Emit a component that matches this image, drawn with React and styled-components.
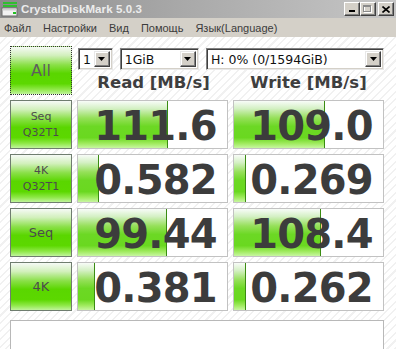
import React from "react";
import styled, { createGlobalStyle } from "styled-components";

const Global = createGlobalStyle`
  html, body { margin: 0; padding: 0; }
  body { width: 396px; height: 349px; overflow: hidden; background: #fff; }
`;

const Window = styled.div`
  width: 396px;
  height: 349px;
  display: flex;
  flex-direction: column;
  overflow: hidden;
  font-family: "Liberation Sans", Arial, sans-serif;
`;

const TitleBar = styled.div`
  height: 18px;
  flex: none;
  display: flex;
  align-items: center;
  padding: 0 2px 0 1px;
  background: linear-gradient(to right, #8c8c8c 0%, #a8a8a8 45%, #c6c6c6 100%);
`;

const TitleText = styled.div`
  flex: 1;
  margin-left: 3px;
  font-weight: bold;
  font-size: 11.5px;
  color: #ececec;
  letter-spacing: 0.1px;
`;

const WinButtons = styled.div`
  display: flex;
  align-items: center;
`;

const WinButton = styled.div`
  width: 16px;
  height: 14px;
  box-sizing: border-box;
  background: #d4d0c8;
  border-top: 1px solid #fff;
  border-left: 1px solid #fff;
  border-right: 1px solid #404040;
  border-bottom: 1px solid #404040;
  box-shadow: inset -1px -1px 0 #808080;
  margin-left: ${(p) => (p.$gap ? "2px" : "0")};
  display: flex;
  align-items: center;
  justify-content: center;
`;

const MenuBar = styled.div`
  height: 19px;
  flex: none;
  display: flex;
  align-items: center;
  background: #d4d0c8;
  padding-left: 4px;
  gap: 12px;
`;

const MenuItem = styled.span`
  font-size: 11px;
  color: #3c3c3c;
`;

const Main = styled.div`
  flex: 1;
  display: grid;
  grid-template-columns: 62px 151px 151px;
  grid-auto-rows: 49px;
  column-gap: 5px;
  row-gap: 5px;
  padding: 9px 12px 0 10px;
  background: repeating-linear-gradient(
    135deg,
    #ffffff 0px,
    #ffffff 4px,
    #f1f1f1 4px,
    #f1f1f1 5.5px
  );
  align-content: start;
`;

const greenFace = `linear-gradient(
    #f6faf6 0%,
    #d2f0bc 18%,
    #8ae048 38%,
    #5ad600 56%,
    #5cd800 78%,
    #8ee846 90%,
    #c0f49c 100%
  )`;

const AllButton = styled.div`
  box-sizing: border-box;
  height: 49px;
  border: 1px dotted #333;
  background: ${greenFace};
  display: flex;
  align-items: center;
  justify-content: center;
  font-family: "DejaVu Sans", sans-serif;
  font-size: 16px;
  color: #5e5e5e;
`;

const HeaderCell = styled.div`
  display: flex;
  flex-direction: column;
  grid-column: ${(p) => p.$col || "auto"};
`;

const SelectRow = styled.div`
  margin-top: 2px;
  height: 22px;
  display: flex;
  gap: 7px;
  padding-left: 1px;
`;

const Select = styled.div`
  box-sizing: border-box;
  width: ${(p) => p.$w}px;
  height: 22px;
  background: #fff;
  border-top: 1px solid #808080;
  border-left: 1px solid #808080;
  border-right: 1px solid #e8e8e8;
  border-bottom: 1px solid #e8e8e8;
  box-shadow: inset 1px 1px 0 #404040, inset -1px -1px 0 #d4d0c8;
  display: flex;
  align-items: center;
  padding: 2px;
`;

const SelectText = styled.span`
  flex: 1;
  padding-left: 2px;
  font-family: "DejaVu Sans", sans-serif;
  font-size: 12.5px;
  color: #111;
  white-space: nowrap;
  overflow: hidden;
`;

const Arrow = styled.div`
  width: 16px;
  height: 16px;
  box-sizing: border-box;
  flex: none;
  background: #d4d0c8;
  border-top: 1px solid #e8e8e8;
  border-left: 1px solid #e8e8e8;
  border-right: 1px solid #404040;
  border-bottom: 1px solid #404040;
  box-shadow: inset -1px -1px 0 #808080, inset 1px 1px 0 #fff;
  display: flex;
  align-items: center;
  justify-content: center;
`;

const TitlesRow = styled.div`
  flex: 1;
  display: grid;
  grid-template-columns: 151px 151px;
  column-gap: 5px;
`;

const ColTitle = styled.div`
  display: flex;
  align-items: center;
  justify-content: center;
  padding-left: ${(p) => (p.$shift ? p.$shift : 0)}px;
  font-family: "DejaVu Sans", sans-serif;
  font-weight: bold;
  font-size: 16.5px;
  color: #3e3e3e;
  white-space: nowrap;
`;

const LabelButton = styled.div`
  box-sizing: border-box;
  height: 49px;
  border: 1px solid #6f7d6f;
  background: ${greenFace};
  display: flex;
  flex-direction: column;
  align-items: center;
  justify-content: center;
  font-family: "DejaVu Sans", sans-serif;
  font-size: ${(p) => (p.$small ? "11px" : "13px")};
  line-height: 16px;
  color: #4c4c4c;
`;

const Cell = styled.div`
  position: relative;
  box-sizing: border-box;
  height: 49px;
  border: 1px solid #c2c2c2;
  background: #fff;
  overflow: hidden;
`;

const Bar = styled.div`
  position: absolute;
  left: 0;
  top: 0;
  bottom: 0;
  box-sizing: border-box;
  border-right: 1px solid #3a8c12;
  background: linear-gradient(
    #f8fcf8 0%,
    #d4f0c4 16%,
    #96e05a 36%,
    #6cd824 54%,
    #6ad820 78%,
    #9eea5c 90%,
    #c8f6a2 100%
  );
`;

const Value = styled.div`
  position: relative;
  height: 47px;
  line-height: 50px;
  text-align: center;
  padding-left: 6px;
  font-family: "DejaVu Sans", sans-serif;
  font-weight: bold;
  font-size: 40px;
  letter-spacing: -0.8px;
  color: #3c3c3c;
`;

const Comment = styled.div`
  grid-column: 1 / -1;
  margin-top: 4px;
  height: 40px;
  box-sizing: border-box;
  border: 1px solid #b8b8b8;
  background: #fff;
`;

const rows = [
  { label: ["Seq", "Q32T1"], read: "111.6", write: "109.0", rw: 90, ww: 91 },
  { label: ["4K", "Q32T1"], read: "0.582", write: "0.269", rw: 21, ww: 12 },
  { label: ["Seq"], read: "99.44", write: "108.4", rw: 89, ww: 87 },
  { label: ["4K"], read: "0.381", write: "0.262", rw: 17, ww: 12 },
];

const DiskIcon = () => (
  <svg width="17" height="16" viewBox="0 0 17 16">
    <rect x="2" y="1" width="14" height="2" fill="#2fbf2f" />
    <rect x="2" y="4" width="14" height="2" fill="#2fbf2f" />
    <rect x="1" y="7" width="15" height="8" fill="#f2f2f2" stroke="#6a6a6a" strokeWidth="1" />
    <rect x="1.5" y="7.5" width="14" height="2" fill="#cfcfcf" />
    <rect x="12" y="11" width="3" height="2" fill="#22c022" />
  </svg>
);

const DownTri = () => (
  <svg width="7" height="4" viewBox="0 0 7 4">
    <polygon points="0,0 7,0 3.5,4" fill="#000" />
  </svg>
);

export default function App() {
  return (
    <>
      <Global />
      <Window>
        <TitleBar>
          <DiskIcon />
          <TitleText>CrystalDiskMark 5.0.3</TitleText>
          <WinButtons>
            <WinButton>
              <svg width="8" height="8" viewBox="0 0 8 8">
                <rect x="1" y="5" width="6" height="2" fill="#000" />
              </svg>
            </WinButton>
            <WinButton>
              <svg width="10" height="9" viewBox="0 0 10 9">
                <rect x="1.5" y="1.5" width="7" height="6" fill="none" stroke="#fff" />
                <rect x="0.5" y="0.5" width="7" height="6" fill="none" stroke="#8a8a8a" />
                <rect x="1" y="1" width="6" height="1" fill="#8a8a8a" />
              </svg>
            </WinButton>
            <WinButton $gap>
              <svg width="8" height="7" viewBox="0 0 8 7">
                <path d="M0.5 0.5 L7.5 6.5 M7.5 0.5 L0.5 6.5" stroke="#000" strokeWidth="1.6" />
              </svg>
            </WinButton>
          </WinButtons>
        </TitleBar>
        <MenuBar>
          <MenuItem>Файл</MenuItem>
          <MenuItem>Настройки</MenuItem>
          <MenuItem>Вид</MenuItem>
          <MenuItem>Помощь</MenuItem>
          <MenuItem>Язык(Language)</MenuItem>
        </MenuBar>
        <Main>
          <AllButton>All</AllButton>
          <HeaderCell $col="2 / 4">
            <SelectRow>
              <Select $w={35}>
                <SelectText>1</SelectText>
                <Arrow><DownTri /></Arrow>
              </Select>
              <Select $w={80}>
                <SelectText>1GiB</SelectText>
                <Arrow><DownTri /></Arrow>
              </Select>
              <Select $w={180}>
                <SelectText>H: 0% (0/1594GiB)</SelectText>
                <Arrow><DownTri /></Arrow>
              </Select>
            </SelectRow>
            <TitlesRow>
              <ColTitle $shift={2}>Read [MB/s]</ColTitle>
              <ColTitle>Write [MB/s]</ColTitle>
            </TitlesRow>
          </HeaderCell>
          {rows.map((r, i) => (
            <React.Fragment key={i}>
              <LabelButton $small={r.label.length > 1}>
                {r.label.map((l) => (
                  <span key={l}>{l}</span>
                ))}
              </LabelButton>
              <Cell>
                <Bar style={{ width: `${r.rw}px` }} />
                <Value>{r.read}</Value>
              </Cell>
              <Cell>
                <Bar style={{ width: `${r.ww}px` }} />
                <Value>{r.write}</Value>
              </Cell>
            </React.Fragment>
          ))}
          <Comment />
        </Main>
      </Window>
    </>
  );
}
